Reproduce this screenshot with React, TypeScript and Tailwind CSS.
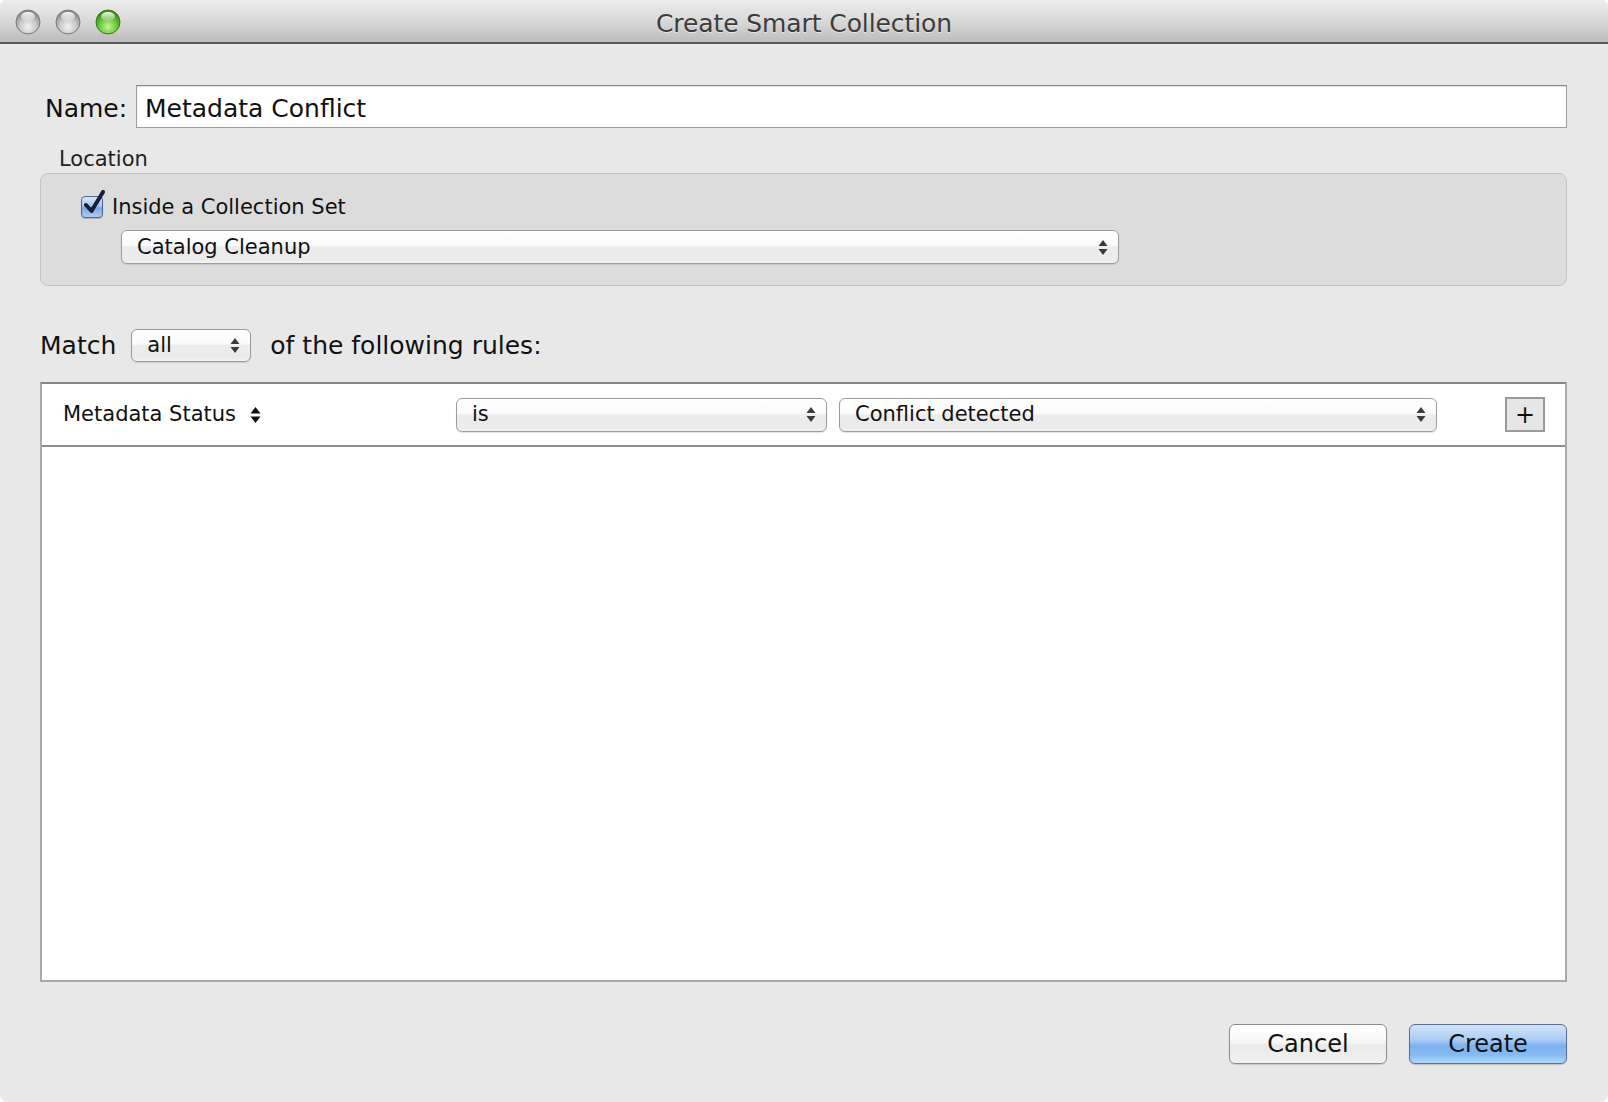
import React from "react";

function Light({ green }: { green?: boolean }) {
  const id = green ? "lg-green" : "lg-gray";
  return (
    <svg width="26" height="26" viewBox="0 0 26 26">
      <defs>
        <radialGradient id={id} cx="50%" cy="70%" r="60%">
          <stop offset="0%" stopColor={green ? "#c8f59a" : "#f4f4f4"} />
          <stop offset="60%" stopColor={green ? "#6cc63a" : "#c6c6c6"} />
          <stop offset="100%" stopColor={green ? "#3b8e1c" : "#8e8e8e"} />
        </radialGradient>
        <linearGradient id={id + "-hi"} x1="0" y1="0" x2="0" y2="1">
          <stop offset="0%" stopColor="#ffffff" stopOpacity="0.95" />
          <stop offset="100%" stopColor="#ffffff" stopOpacity="0.1" />
        </linearGradient>
      </defs>
      <circle cx="13" cy="13" r="12" fill={`url(#${id})`} stroke={green ? "#357d18" : "#7a7a7a"} strokeWidth="1" />
      <ellipse cx="13" cy="7.5" rx="7" ry="4.5" fill={`url(#${id}-hi)`} />
    </svg>
  );
}

function Arrows({ bold }: { bold?: boolean }) {
  if (bold) {
    return (
      <svg width="11" height="18" viewBox="0 0 11 18">
        <polygon points="0.5,7.5 5.5,1 10.5,7.5" fill="#111" />
        <polygon points="0.5,10.5 10.5,10.5 5.5,17" fill="#111" />
      </svg>
    );
  }
  return (
    <svg width="10" height="17" viewBox="0 0 10 17">
      <polygon points="0.5,7 5,1 9.5,7" fill="#3a3a3a" />
      <polygon points="0.5,10 9.5,10 5,16" fill="#3a3a3a" />
    </svg>
  );
}

function Popup({ label, className }: { label: string; className: string }) {
  return (
    <div
      className={`flex items-center justify-between rounded-[6px] border border-[#9c9c9c] bg-[linear-gradient(#ffffff_0%,#fbfbfb_45%,#ececec_50%,#ebebeb_90%,#f4f4f4_100%)] pl-[15px] pr-[10px] shadow-[0_1px_1px_rgba(0,0,0,0.12)] ${className}`}
    >
      <span className="text-[21px] leading-none text-[#111]">{label}</span>
      <Arrows />
    </div>
  );
}

function Checkbox() {
  return (
    <div className="relative h-[22px] w-[22px]">
      <div className="h-[22px] w-[22px] rounded-[4px] border border-[#4f6a92] bg-[linear-gradient(#d6e6f9_0%,#a7c7ee_45%,#7ea9e2_55%,#a9cdf5_100%)] shadow-[0_1px_1px_rgba(0,0,0,0.2)]" />
      <svg className="absolute left-[2px] top-[-6px]" width="24" height="26" viewBox="0 0 24 26">
        <path d="M3 15 L8.5 21 L20 2" fill="none" stroke="#15203a" strokeWidth="4" strokeLinecap="round" strokeLinejoin="round" />
      </svg>
    </div>
  );
}

export default function App() {
  return (
    <div className="h-[1102px] w-[1608px] bg-white font-['DejaVu_Sans',sans-serif]">
      <div className="flex h-full w-full flex-col overflow-hidden rounded-[7px] bg-[#e8e8e8]">
        <div className="grid h-[44px] grid-cols-[1fr_auto_1fr] items-center border-b-2 border-[#5a5a5a] bg-[linear-gradient(#ededed_0%,#d9d9d9_50%,#bcbcbc_100%)]">
          <div className="flex items-center gap-[14px] pl-[15px] pt-[2px]">
            <Light />
            <Light />
            <Light green />
          </div>
          <div className="pt-[4px] text-[25px] leading-none tracking-[-0.1px] text-[#3c3c3c] [text-shadow:0_1px_0_rgba(255,255,255,0.5)]">
            Create Smart Collection
          </div>
          <div />
        </div>

        <div className="flex flex-1 flex-col pl-[40px] pr-[41px]">
          <div className="mt-[41px] flex items-center">
            <span className="ml-[5px] w-[91px] pt-[4px] text-[25px] leading-none text-[#111]">Name:</span>
            <div className="flex h-[43px] flex-1 items-center border border-[#9d9d9d] border-t-[#858585] bg-white pl-[8px] pt-[4px] shadow-[inset_0_1px_1px_rgba(0,0,0,0.12)]">
              <span className="text-[25px] leading-none text-[#111]">Metadata Conflict</span>
            </div>
          </div>

          <div className="ml-[19px] mt-[19px] text-[21px] leading-[24px] text-[#222]">Location</div>

          <div className="mt-[2px] flex h-[113px] flex-col rounded-[8px] border border-[#c2c2c2] bg-[#dcdcdc] pl-[40px]">
            <div className="mt-[22px] flex items-center gap-[9px]">
              <Checkbox />
              <span className="text-[21px] leading-none text-[#111]">Inside a Collection Set</span>
            </div>
            <Popup label="Catalog Cleanup" className="ml-[40px] mt-[12px] h-[34px] w-[998px]" />
          </div>

          <div className="mt-[43px] flex items-center">
            <span className="text-[25px] leading-none text-[#111]">Match</span>
            <Popup label="all" className="ml-[15px] h-[33px] w-[120px]" />
            <span className="ml-[19px] text-[25px] leading-none text-[#111]">of the following rules:</span>
          </div>

          <div className="mt-[20px] flex h-[600px] flex-col border-2 border-[#a9a9a9] border-t-[#878787] bg-white">
            <div className="flex h-[63px] items-center border-b-2 border-[#8e8e8e]">
              <div className="flex w-[414px] items-center pl-[21px]">
                <span className="text-[21px] leading-none text-[#111]">Metadata Status</span>
                <span className="ml-[14px]">
                  <Arrows bold />
                </span>
              </div>
              <Popup label="is" className="h-[34px] w-[371px]" />
              <Popup label="Conflict detected" className="ml-[12px] h-[34px] w-[598px]" />
              <div className="flex-1" />
              <div className="mr-[20px] flex h-[35px] w-[40px] items-center justify-center border-2 border-[#9a9a9a] bg-[#e6e6e6]">
                <span className="text-[24px] leading-none text-[#111]">+</span>
              </div>
            </div>
          </div>

          <div className="mt-[42px] flex justify-end gap-[22px]">
            <div className="flex h-[40px] w-[158px] items-center justify-center rounded-[6px] border border-[#8e8e8e] bg-[linear-gradient(#ffffff_0%,#f7f7f7_45%,#e9e9e9_55%,#f2f2f2_100%)] shadow-[0_1px_1px_rgba(0,0,0,0.15)]">
              <span className="text-[24px] leading-none text-[#111]">Cancel</span>
            </div>
            <div className="flex h-[40px] w-[158px] items-center justify-center rounded-[6px] border border-[#5a6f93] bg-[linear-gradient(#d2e4fa_0%,#a9cbf4_40%,#7db1ef_55%,#86bcf4_80%,#b2dafb_100%)] shadow-[0_1px_1px_rgba(0,0,0,0.2)]">
              <span className="text-[24px] leading-none text-[#111]">Create</span>
            </div>
          </div>
        </div>
      </div>
    </div>
  );
}
